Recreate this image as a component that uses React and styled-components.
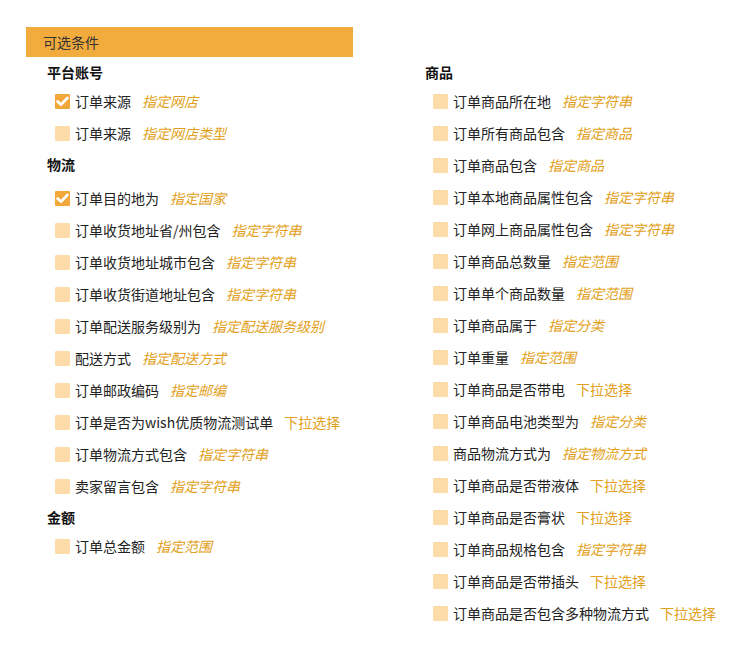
import styled, { createGlobalStyle } from "styled-components";

const GlobalStyle = createGlobalStyle`
  html, body {
    margin: 0;
    padding: 0;
    background: #fff;
  }
  body {
    font-family: "Noto Sans CJK SC", "Noto Sans", sans-serif;
    font-size: 14px;
    color: #222;
  }
`;

const left = [
  {
    title: "平台账号",
    items: [
      { label: "订单来源", link: "指定网店", checked: true },
      { label: "订单来源", link: "指定网店类型" },
    ],
  },
  {
    title: "物流",
    extra: true,
    items: [
      { label: "订单目的地为", link: "指定国家", checked: true },
      { label: "订单收货地址省/州包含", link: "指定字符串" },
      { label: "订单收货地址城市包含", link: "指定字符串" },
      { label: "订单收货街道地址包含", link: "指定字符串" },
      { label: "订单配送服务级别为", link: "指定配送服务级别" },
      { label: "配送方式", link: "指定配送方式" },
      { label: "订单邮政编码", link: "指定邮编" },
      { label: "订单是否为wish优质物流测试单", link: "下拉选择", plain: true },
      { label: "订单物流方式包含", link: "指定字符串" },
      { label: "卖家留言包含", link: "指定字符串" },
    ],
  },
  {
    title: "金额",
    items: [{ label: "订单总金额", link: "指定范围" }],
  },
];

const right = [
  {
    title: "商品",
    items: [
      { label: "订单商品所在地", link: "指定字符串" },
      { label: "订单所有商品包含", link: "指定商品" },
      { label: "订单商品包含", link: "指定商品" },
      { label: "订单本地商品属性包含", link: "指定字符串" },
      { label: "订单网上商品属性包含", link: "指定字符串" },
      { label: "订单商品总数量", link: "指定范围" },
      { label: "订单单个商品数量", link: "指定范围" },
      { label: "订单商品属于", link: "指定分类" },
      { label: "订单重量", link: "指定范围" },
      { label: "订单商品是否带电", link: "下拉选择", plain: true },
      { label: "订单商品电池类型为", link: "指定分类" },
      { label: "商品物流方式为", link: "指定物流方式" },
      { label: "订单商品是否带液体", link: "下拉选择", plain: true },
      { label: "订单商品是否膏状", link: "下拉选择", plain: true },
      { label: "订单商品规格包含", link: "指定字符串" },
      { label: "订单商品是否带插头", link: "下拉选择", plain: true },
      { label: "订单商品是否包含多种物流方式", link: "下拉选择", plain: true },
    ],
  },
];

export default function App() {
  return (
    <>
      <GlobalStyle />
      <Page>
        <Header>可选条件</Header>
        <Columns>
          <Column>{left.map(renderSection)}</Column>
          <Column>{right.map(renderSection)}</Column>
        </Columns>
      </Page>
    </>
  );
}

function renderSection({ title, items, extra }) {
  return (
    <Section key={title}>
      <Title $extra={extra}>{title}</Title>
      {items.map((item, i) => (
        <Row key={i}>
          <Box $checked={item.checked}>
            {item.checked && (
              <svg width="15" height="15" viewBox="0 0 15 15">
                <path
                  d="M2.6 7.4 L6 10.6 L12.4 4"
                  fill="none"
                  stroke="#fff"
                  strokeWidth="2.8"
                  strokeLinecap="round"
                  strokeLinejoin="round"
                />
              </svg>
            )}
          </Box>
          <Label>{item.label}</Label>
          <Link $plain={item.plain}>{item.link}</Link>
        </Row>
      ))}
    </Section>
  );
}

const Page = styled.div`
  padding: 27px 0 0 26px;
`;

const Header = styled.div`
  width: 310px;
  height: 30px;
  line-height: 30px;
  padding-left: 17px;
  background: #f2ac3e;
  color: #333;
  font-size: 14px;
`;

const Columns = styled.div`
  display: grid;
  grid-template-columns: 378px 1fr;
  padding-left: 21px;
`;

const Column = styled.div`
  display: flex;
  flex-direction: column;
`;

const Section = styled.div`
  display: flex;
  flex-direction: column;
`;

const Title = styled.div`
  height: 22px;
  line-height: 22px;
  padding-top: 4px;
  padding-bottom: ${({ $extra }) => ($extra ? "7px" : "2px")};
  font-weight: 700;
  font-size: 14px;
  color: #111;
`;

const Row = styled.div`
  display: flex;
  align-items: center;
  height: 32px;
  padding-left: 8px;
`;

const Box = styled.span`
  width: 15px;
  height: 15px;
  flex: none;
  border-radius: 1px;
  display: flex;
  align-items: center;
  justify-content: center;
  background: ${({ $checked }) => ($checked ? "#f2a73b" : "#fddcaa")};
`;

const Label = styled.span`
  margin-left: 5px;
  color: #222;
  white-space: nowrap;
`;

const Link = styled.span`
  margin-left: 11px;
  color: #e2a020;
  font-style: ${({ $plain }) => ($plain ? "normal" : "italic")};
  white-space: nowrap;
  cursor: pointer;
`;
